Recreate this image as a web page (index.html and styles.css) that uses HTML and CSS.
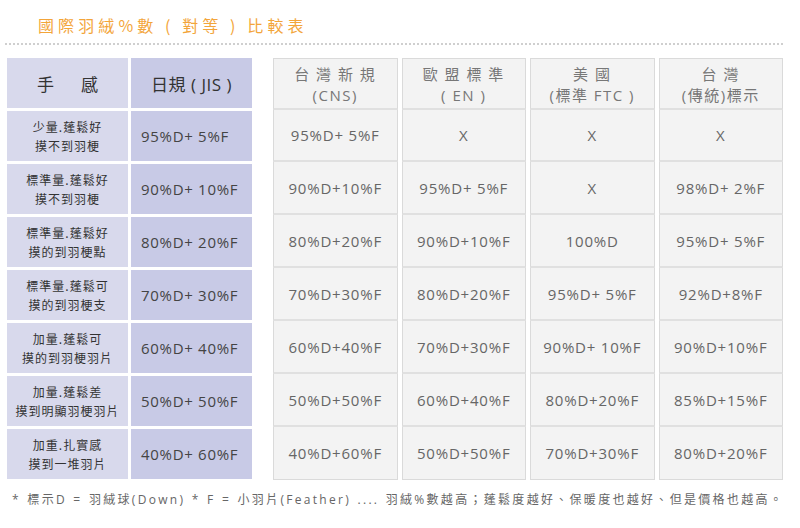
FILE: index.html
```html
<!DOCTYPE html>
<html lang="zh-Hant">
<head>
<meta charset="utf-8">
<title>國際羽絨%數比較表</title>
<link rel="stylesheet" href="styles.css">
</head>
<body>
<div class="page">
  <h1 class="title">國際羽絨%數 ( 對等 ) 比較表</h1>
  <div class="rule"></div>
  <div class="tables">
    <div class="jis">
      <div class="c1 head">手　感</div>
      <div class="c2 head">日規 ( JIS )</div>
      <div class="c1"><span>少量.蓬鬆好</span><span>摸不到羽梗</span></div>
      <div class="c2 num">95%D+ 5%F</div>
      <div class="c1"><span>標準量.蓬鬆好</span><span>摸不到羽梗</span></div>
      <div class="c2 num">90%D+ 10%F</div>
      <div class="c1"><span>標準量.蓬鬆好</span><span>摸的到羽梗點</span></div>
      <div class="c2 num">80%D+ 20%F</div>
      <div class="c1"><span>標準量.蓬鬆可</span><span>摸的到羽梗支</span></div>
      <div class="c2 num">70%D+ 30%F</div>
      <div class="c1"><span>加量.蓬鬆可</span><span>摸的到羽梗羽片</span></div>
      <div class="c2 num">60%D+ 40%F</div>
      <div class="c1"><span>加量.蓬鬆差</span><span>摸到明顯羽梗羽片</span></div>
      <div class="c2 num">50%D+ 50%F</div>
      <div class="c1"><span>加重.扎實感</span><span>摸到一堆羽片</span></div>
      <div class="c2 num">40%D+ 60%F</div>
    </div>
    <div class="others">
      <div class="cell head"><span>台 灣 新 規</span><span>(CNS)</span></div>
      <div class="cell head"><span>歐 盟 標 準</span><span>( EN )</span></div>
      <div class="cell head"><span>美 國</span><span>(標準 FTC )</span></div>
      <div class="cell head"><span>台 灣</span><span>(傳統)標示</span></div>

      <div class="cell">95%D+ 5%F</div>
      <div class="cell">X</div>
      <div class="cell">X</div>
      <div class="cell">X</div>

      <div class="cell">90%D+10%F</div>
      <div class="cell">95%D+ 5%F</div>
      <div class="cell">X</div>
      <div class="cell">98%D+ 2%F</div>

      <div class="cell">80%D+20%F</div>
      <div class="cell">90%D+10%F</div>
      <div class="cell">100%D</div>
      <div class="cell">95%D+ 5%F</div>

      <div class="cell">70%D+30%F</div>
      <div class="cell">80%D+20%F</div>
      <div class="cell">95%D+ 5%F</div>
      <div class="cell">92%D+8%F</div>

      <div class="cell">60%D+40%F</div>
      <div class="cell">70%D+30%F</div>
      <div class="cell">90%D+ 10%F</div>
      <div class="cell">90%D+10%F</div>

      <div class="cell">50%D+50%F</div>
      <div class="cell">60%D+40%F</div>
      <div class="cell">80%D+20%F</div>
      <div class="cell">85%D+15%F</div>

      <div class="cell last">40%D+60%F</div>
      <div class="cell last">50%D+50%F</div>
      <div class="cell last">70%D+30%F</div>
      <div class="cell last">80%D+20%F</div>
    </div>
  </div>
  <p class="note">* 標示D = 羽絨球(Down) * F = 小羽片(Feather) .... 羽絨%數越高；蓬鬆度越好、保暖度也越好、但是價格也越高。</p>
</div>
</body>
</html>
```

FILE: styles.css
```css
html, body {
  margin: 0;
  padding: 0;
  background: #ffffff;
}

body {
  font-family: "Open Sans", "Noto Sans CJK TC", sans-serif;
  width: 800px;
  height: 528px;
  overflow: hidden;
}

.page {
  padding-top: 15px;
}

.title {
  margin: 0;
  padding-left: 38px;
  font-family: "Noto Sans CJK TC", sans-serif;
  font-weight: 400;
  font-size: 16px;
  line-height: 20px;
  letter-spacing: 4.1px;
  color: #f3a53a;
}

.rule {
  margin: 8px 17px 0 5px;
  border-top: 2px dotted #cfcfcf;
}

.tables {
  display: flex;
  gap: 21px;
  margin: 13px 0 0 7px;
}

/* Left table (JIS) */
.jis {
  display: grid;
  grid-template-columns: 121px 121px;
  grid-auto-rows: 50px;
  gap: 3px;
  width: 245px;
}

.c1, .c2 {
  display: flex;
  flex-direction: column;
  justify-content: center;
  color: #333;
}

.c1 {
  background: #d8d9ec;
  align-items: center;
  font-family: "Noto Sans CJK TC", sans-serif;
  font-size: 12px;
  line-height: 19px;
  letter-spacing: 1px;
}

.c2 {
  background: #c8cae6;
}

.c2.num {
  padding-left: 10px;
  font-size: 15px;
  color: #444;
  letter-spacing: 0.7px;
}

.head {
  align-items: center;
  font-size: 17px;
  color: #333;
}

.c1.head {
  font-size: 17px;
  letter-spacing: 5px;
  padding-left: 5px;
}

.c2.head {
  font-family: "Open Sans", "Noto Sans CJK TC", sans-serif;
  letter-spacing: 0.5px;
}

/* Right table */
.others {
  display: grid;
  grid-template-columns: repeat(4, 1fr);
  grid-template-rows: 52px 52px repeat(6, 53px);
  column-gap: 4px;
  width: 510px;
}

.cell {
  box-sizing: border-box;
  display: flex;
  flex-direction: column;
  align-items: center;
  justify-content: center;
  background: #f3f3f3;
  border-left: 1px solid #dadada;
  border-right: 1px solid #dadada;
  border-bottom: 2px solid #e0e0e0;
  font-size: 15px;
  letter-spacing: 0.8px;
  color: #666;
}

.cell.last {
  border-bottom: 1px solid #dadada;
}

.cell.head {
  border-top: 1px solid #dadada;
  font-family: "Open Sans", "Noto Sans CJK TC", sans-serif;
  font-size: 15px;
  line-height: 21px;
  letter-spacing: 1.5px;
  color: #777;
  padding-top: 2px;
}

.note {
  margin: 12px 0 0 12px;
  font-family: "Open Sans", "Noto Sans CJK TC", sans-serif;
  font-size: 12px;
  line-height: 16px;
  letter-spacing: 2.3px;
  word-spacing: 1px;
  color: #666;
  white-space: nowrap;
}
```
